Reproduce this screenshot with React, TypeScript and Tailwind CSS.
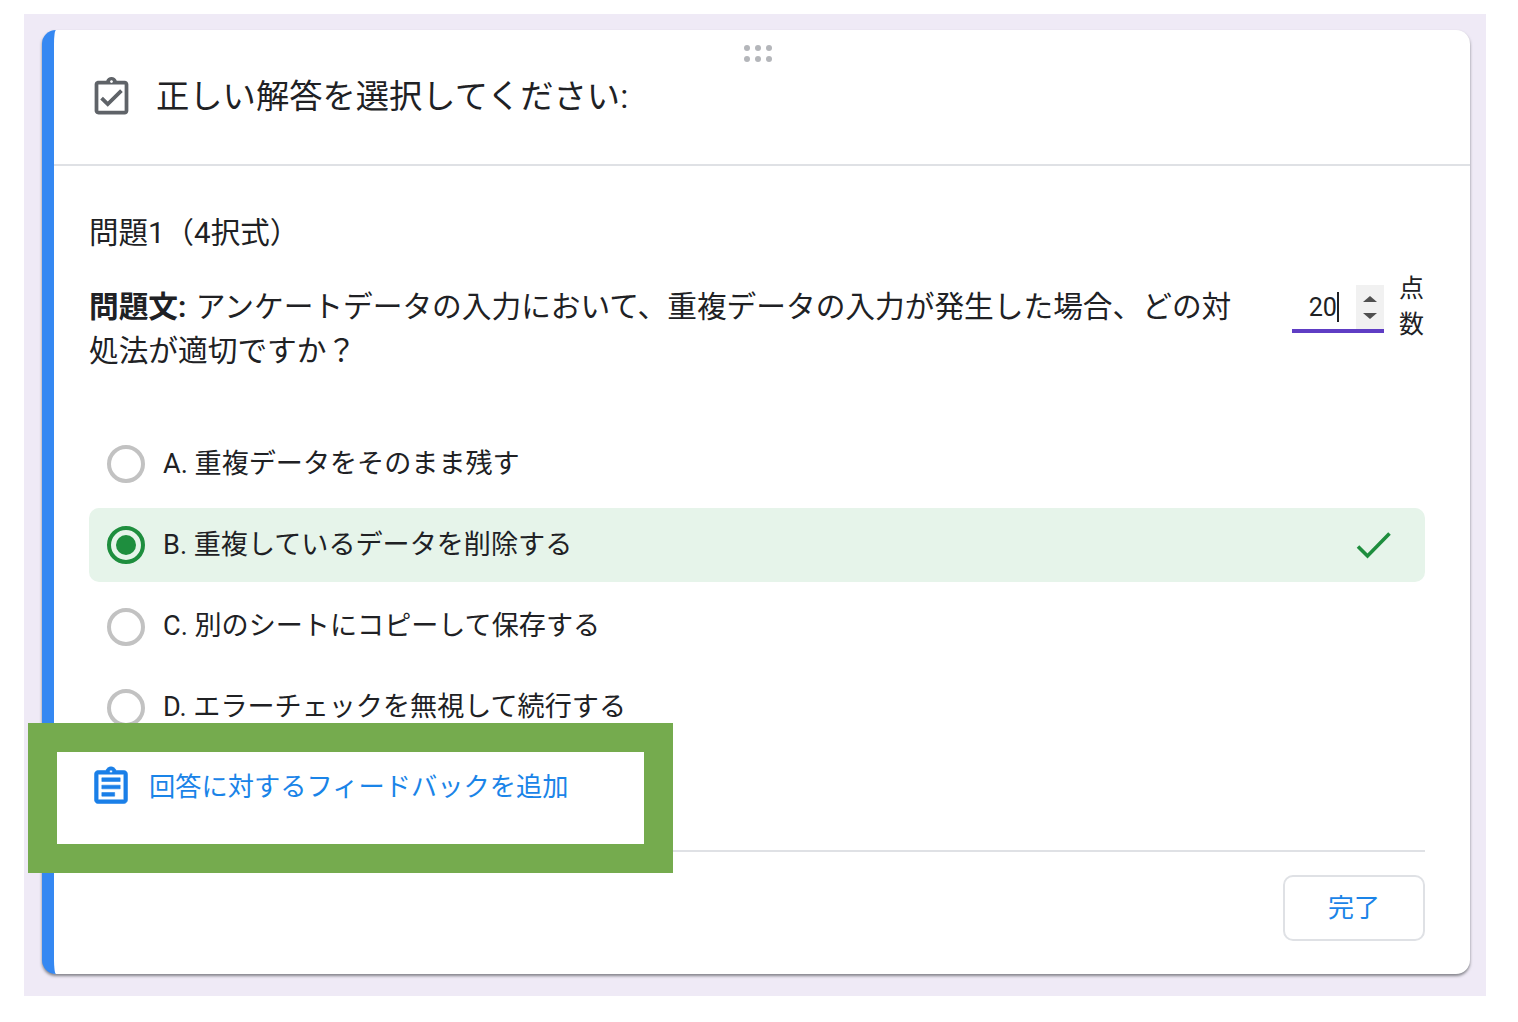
const font = { fontFamily: '"Roboto", "Noto Sans CJK JP", sans-serif' };

function Radio({ checked }: { checked?: boolean }) {
	return (
		<span
			className={`flex h-[38px] w-[38px] shrink-0 items-center justify-center rounded-full border-4 ${
				checked ? "border-[#1e8e3e]" : "border-[#c2c2c2]"
			}`}
		>
			{checked && <span className="h-[20px] w-[20px] rounded-full bg-[#1e8e3e]" />}
		</span>
	);
}

function Option({ label, correct }: { label: string; correct?: boolean }) {
	return (
		<div
			className={`flex h-[74px] items-center rounded-[10px] pl-[18px] pr-[32px] ${
				correct ? "bg-[#e6f4ea]" : ""
			}`}
		>
			<Radio checked={correct} />
			<span className="ml-[18px] -mt-[1px] flex-1 text-[27.1px] leading-[40px] text-[#202124]">
				{label}
			</span>
			{correct && (
				<svg width="40" height="40" viewBox="0 0 40 40" fill="none">
					<path d="M5 21.5 14.5 31 36.5 8.5" stroke="#1e8e3e" strokeWidth="3.6" />
				</svg>
			)}
		</div>
	);
}

export default function App() {
	return (
		<div className="relative h-[1022px] w-[1518px] bg-white pl-[24px] pt-[14px]" style={font}>
			<div className="h-[982px] w-[1462px] bg-[#efeaf6] pl-[18px] pt-[16px]">
				<div className="h-[944px] w-[1428px] overflow-hidden rounded-[14px] border-l-[12px] border-[#3588f2] bg-white shadow-[0_2px_3px_rgba(60,64,67,0.6)]">
					{/* header */}
					<div className="relative h-[136px] border-b-2 border-[#dfe1e5]">
						<div className="absolute left-[690px] top-[15px] grid grid-cols-3 gap-[5px]">
							{[0, 1, 2, 3, 4, 5].map((dot) => (
								<span key={dot} className="h-[6px] w-[6px] rounded-full bg-[#b4b6ba]" />
							))}
						</div>
						<div className="flex h-[132px] items-center pl-[35px]">
							<svg width="45" height="45" viewBox="0 0 24 24" fill="#5f6368" className="mt-[2px]">
								<path d="M18 9l-1.41-1.42L10 14.17l-2.58-2.58L6 13l4 3.99zm1-6h-4.18C14.4 1.84 13.3 1 12 1c-1.3 0-2.4.84-2.82 2H5c-.14 0-.27.01-.4.04-.39.08-.74.28-1.01.55-.18.18-.33.4-.43.64-.1.23-.16.49-.16.77v14c0 .27.06.54.16.78s.25.45.43.64c.27.27.62.47 1.01.55.13.02.26.03.4.03h14c1.1 0 2-.9 2-2V5c0-1.1-.9-2-2-2zm-7-.25c.41 0 .75.34.75.75s-.34.75-.75.75-.75-.34-.75-.75.34-.75.75-.75zM19 19H5V5h14v14z" />
							</svg>
							<h1 className="ml-[22px] mt-[2px] text-[33.3px] font-normal leading-[44px] text-[#202124]">
								正しい解答を選択してください:
							</h1>
						</div>
					</div>

					{/* body */}
					<div className="pl-[35px] pr-[45px]">
						<p className="pt-[47px] text-[29.5px] leading-[40px] text-[#202124]">問題1（4択式）</p>
						<div className="mt-[17px] flex items-start">
							<p className="w-[1150px] pt-[15px] text-[29.7px] leading-[44px] text-[#202124]">
								<b className="mr-[2px] font-bold">問題文:</b> アンケートデータの入力において、重複データの入力が発生した場合、どの対処法が適切ですか？
							</p>
							<div className="ml-[53px] mt-[15px] flex w-[92px] flex-col">
								<div className="flex h-[44px] items-center justify-end">
									<span className="mt-[1px] text-[25.2px] leading-[40px] text-[#202124]">20</span>
									<span className="mr-[17px] h-[30px] w-[2px] bg-[#202124]" />
									<span className="flex h-[44px] w-[28px] flex-col items-center justify-center gap-[11px] bg-[#f1f1f1]">
										<span className="h-0 w-0 border-x-[7px] border-b-[6px] border-x-transparent border-b-[#505050]" />
										<span className="h-0 w-0 border-x-[7px] border-t-[6px] border-x-transparent border-t-[#505050]" />
									</span>
								</div>
								<span className="h-[4px] bg-[#5f3dc4]" />
							</div>
							<p className="ml-[15px] mt-[1px] w-[26px] text-[25px] leading-[36px] text-[#202124]">点数</p>
						</div>

						<div className="mt-[54px] flex flex-col gap-[7.33px]">
							<Option label="A. 重複データをそのまま残す" />
							<Option label="B. 重複しているデータを削除する" correct />
							<Option label="C. 別のシートにコピーして保存する" />
							<Option label="D. エラーチェックを無視して続行する" />
						</div>

						<div className="mt-[22px] flex h-[40px] items-center pl-[3px]">
							<svg width="44" height="44" viewBox="0 0 24 24" fill="#1a7fe8" stroke="#1a7fe8" strokeWidth="0.3" className="-ml-[3px] shrink-0">
								<path d="M7 15h7v2H7zm0-4h10v2H7zm0-4h10v2H7zm12-4h-4.18C14.4 1.84 13.3 1 12 1c-1.3 0-2.4.84-2.82 2H5c-.14 0-.27.01-.4.04-.39.08-.74.28-1.01.55-.18.18-.33.4-.43.64-.1.23-.16.49-.16.77v14c0 .27.06.54.16.78s.25.45.43.64c.27.27.62.47 1.01.55.13.02.26.03.4.03h14c1.1 0 2-.9 2-2V5c0-1.1-.9-2-2-2zm-7-.25c.41 0 .75.34.75.75s-.34.75-.75.75-.75-.34-.75-.75.34-.75.75-.75zM19 19H5V5h14v14z" />
							</svg>
							<span className="ml-[16px] text-[26.25px] leading-[40px] text-[#1a84e8]">
								回答に対するフィードバックを追加
							</span>
						</div>

						<div className="mt-[43.5px] flex justify-end border-t-2 border-[#dfe1e5] pt-[23px]">
							<button
								type="button"
								className="h-[66px] w-[142px] rounded-[10px] border-2 border-[#dfe1e5] bg-white text-[26px] text-[#1a84e8]"
							>
								完了
							</button>
						</div>
					</div>
				</div>
			</div>

			{/* green highlight frame on top of the card */}
			<div className="absolute left-[28px] top-[723px] h-[150px] w-[645px] border-[29px] border-[#75ab4e]" />
		</div>
	);
}
